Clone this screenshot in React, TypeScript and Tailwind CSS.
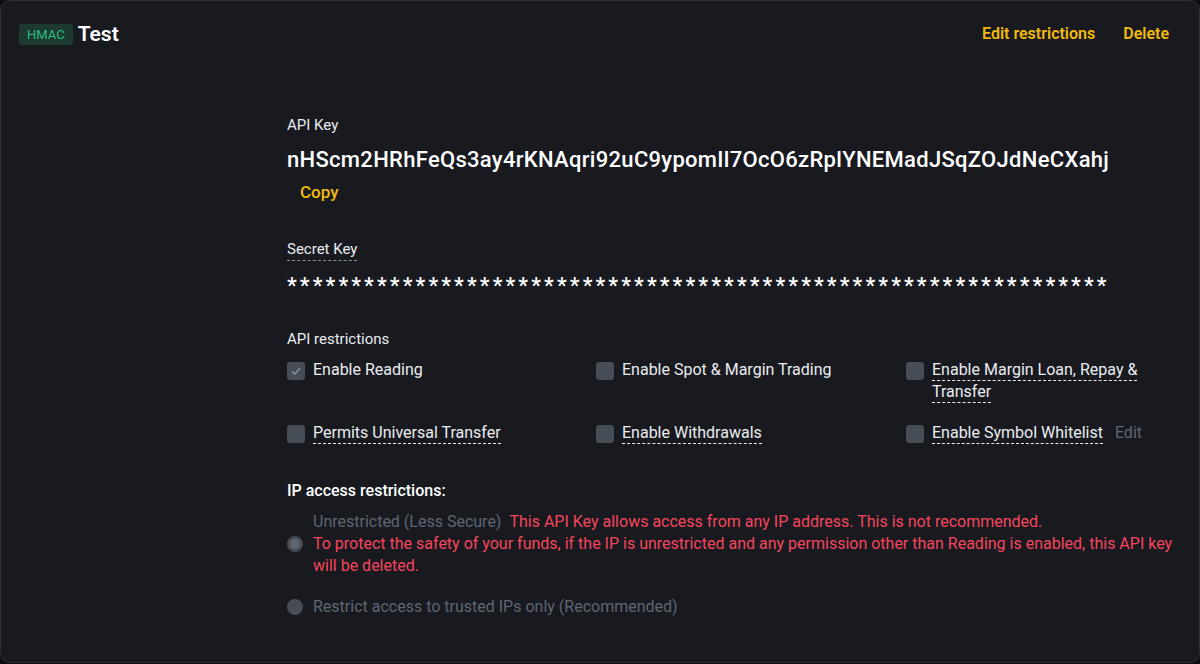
import React from "react";

const font = { fontFamily: "Roboto, 'Liberation Sans', sans-serif" };

const Check = ({ checked }: { checked?: boolean }) => (
  <span className="mt-[3px] flex h-[18px] w-[18px] shrink-0 items-center justify-center rounded-[3px] bg-[#474d57]">
    {checked && (
      <svg width="12" height="12" viewBox="0 0 12 12" fill="none">
        <path d="M2 6.2 4.8 9 10 3" stroke="#848e9c" strokeWidth="1.6" />
      </svg>
    )}
  </span>
);

const Perm = ({
  label,
  checked,
  dashed,
  extra,
}: {
  label: string;
  checked?: boolean;
  dashed?: boolean;
  extra?: string;
}) => (
  <div className="flex items-start gap-[8px]">
    <Check checked={checked} />
    <div className="text-[16px] leading-[22px] text-[#eaecef]">
      <span className={dashed ? "border-b border-dashed border-[#eaecef] pb-[1px]" : ""}>{label}</span>
      {extra && <span className="ml-3 text-[#5e6673]">{extra}</span>}
    </div>
  </div>
);

export default function App() {
  return (
    <div style={font} className="h-[664px] w-[1200px] bg-[#0b0e11]">
      <div className="flex h-[663px] flex-col rounded-[10px] border border-[#2b3139] bg-[#181a20]">
        <div className="flex items-center justify-between pl-[18px] pr-[30px] pt-[20px]">
          <div className="flex items-center gap-[5px]">
            <span className="rounded-[3px] bg-[#1d3a30] px-[8px] py-[3px] text-[13px] leading-[15px] text-[#2ebd85]">HMAC</span>
            <span className="text-[21px] font-semibold leading-[26px] text-white">Test</span>
          </div>
          <div className="flex gap-[28px] text-[16px] font-semibold text-[#f0b90b]">
            <span>Edit restrictions</span>
            <span>Delete</span>
          </div>
        </div>

        <div className="flex flex-col pl-[286px] pt-[68px]">
          <div className="text-[15px] leading-[20px] text-[#eaecef]">API Key</div>
          <div className="mt-[11px] text-[22px] font-medium leading-[28px] tracking-[0.3px] text-white">
            nHScm2HRhFeQs3ay4rKNAqri92uC9ypomIl7OcO6zRplYNEMadJSqZOJdNeCXahj
          </div>
          <div className="ml-[13px] mt-[7px] text-[17px] font-medium leading-[22px] text-[#f0b90b]">Copy</div>

          <div className="mt-[34px]">
            <span className="border-b border-dashed border-[#848e9c] pb-[2px] text-[15px] leading-[20px] text-[#eaecef]">Secret Key</span>
          </div>
          <div className="mt-[13px] text-[22px] font-medium leading-[24px] tracking-[3.1px] text-white">
            ****************************************************************
          </div>

          <div className="mt-[31px] text-[15px] leading-[20px] text-[#eaecef]">API restrictions</div>
          <div className="mt-[10px] grid w-[880px] grid-cols-[309px_310px_1fr] gap-y-[19px]">
            <Perm label="Enable Reading" checked />
            <Perm label="Enable Spot & Margin Trading" />
            <Perm label="Enable Margin Loan, Repay & Transfer" dashed />
            <Perm label="Permits Universal Transfer" dashed />
            <Perm label="Enable Withdrawals" dashed />
            <Perm label="Enable Symbol Whitelist" dashed extra="Edit" />
          </div>

          <div className="mt-[37px] text-[16px] font-medium leading-[20px] text-white">IP access restrictions:</div>
          <div className="mt-[10px] flex items-center gap-[10px]">
            <span className="h-[16px] w-[16px] shrink-0 rounded-full border-[3px] border-[#474d57] bg-[#5e6673]" />
            <div className="w-[860px] text-[16px] leading-[22px]">
              <div>
                <span className="text-[#5e6673]">Unrestricted (Less Secure)</span>
                <span className="ml-[8px] text-[#f6465d]">This API Key allows access from any IP address. This is not recommended.</span>
              </div>
              <div className="text-[#f6465d]">
                To protect the safety of your funds, if the IP is unrestricted and any permission other than Reading is enabled, this API key will be deleted.
              </div>
            </div>
          </div>
          <div className="mt-[19px] flex items-center gap-[10px]">
            <span className="h-[16px] w-[16px] shrink-0 rounded-full bg-[#474d57]" />
            <span className="text-[16px] leading-[22px] text-[#5e6673]">Restrict access to trusted IPs only (Recommended)</span>
          </div>
        </div>
      </div>
    </div>
  );
}
